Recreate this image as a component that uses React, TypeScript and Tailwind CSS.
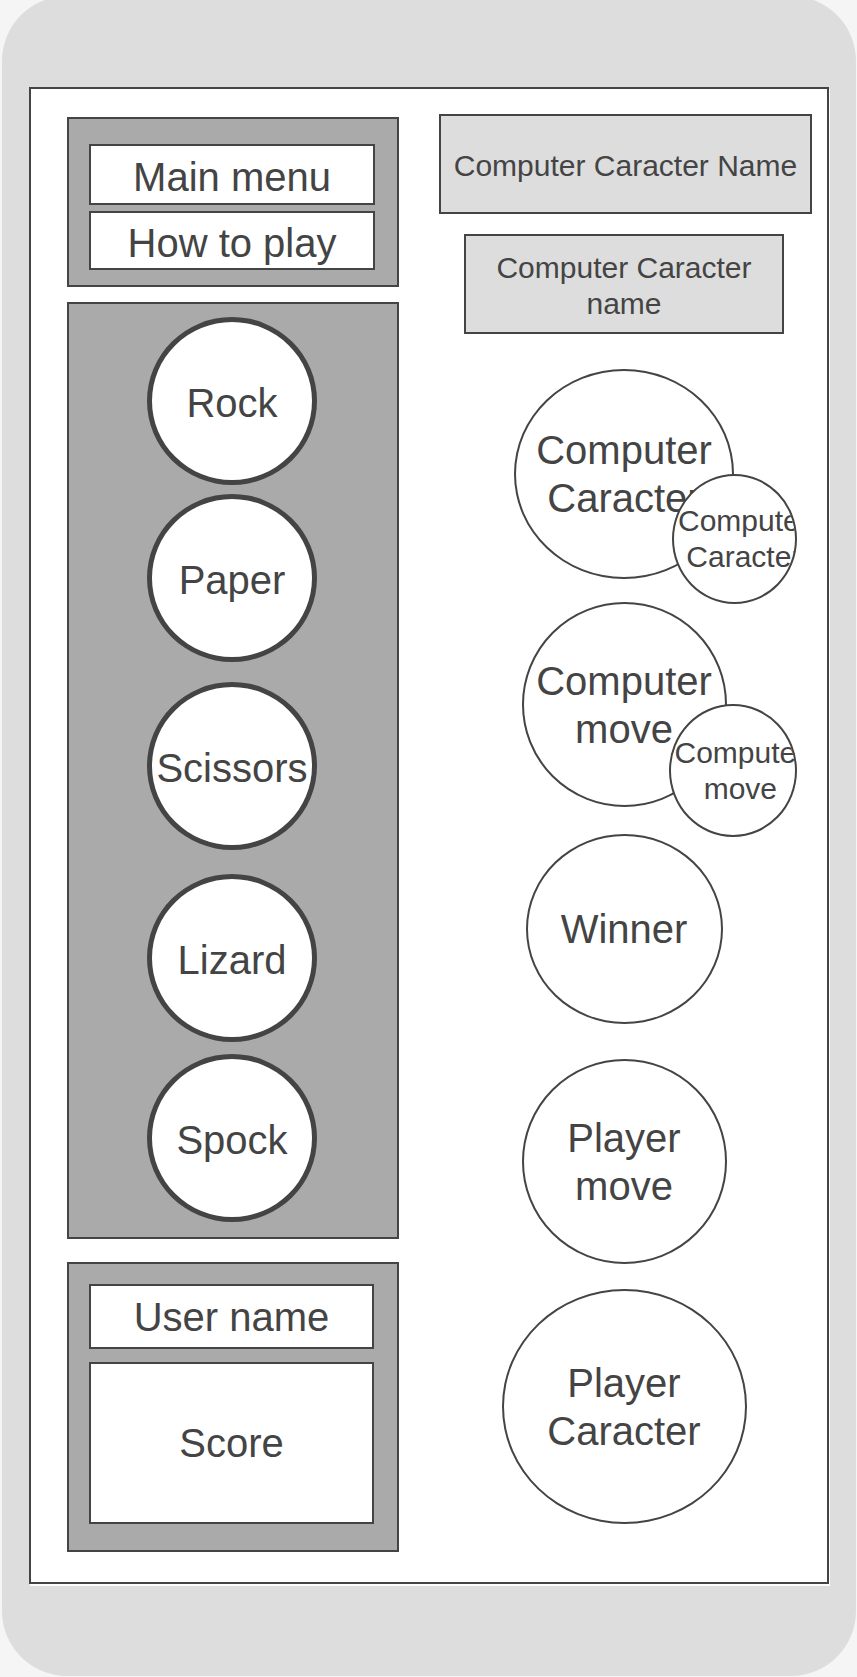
import type { ReactNode } from "react";
import clsx from "clsx";

const moves = [
  { name: "Rock", spacing: "" },
  { name: "Paper", spacing: "mt-[9px]" },
  { name: "Scissors", spacing: "mt-5" },
  { name: "Lizard", spacing: "mt-6" },
  { name: "Spock", spacing: "mt-3" },
];

function Panel({ className, children }: { className?: string; children: ReactNode }) {
  return (
    <section className={clsx("flex flex-col border-2 border-[#444] bg-[#aaa]", className)}>
      {children}
    </section>
  );
}

function MenuButton({ className, children }: { className?: string; children: ReactNode }) {
  return (
    <button
      type="button"
      className={clsx(
        "flex items-center justify-center border-2 border-[#444] bg-white pt-1",
        className,
      )}
    >
      {children}
    </button>
  );
}

function Field({ className, children }: { className?: string; children: ReactNode }) {
  return (
    <div
      className={clsx(
        "flex items-center justify-center border-2 border-[#444] bg-white",
        className,
      )}
    >
      {children}
    </div>
  );
}

function NameBox({ className, children }: { className?: string; children: ReactNode }) {
  return (
    <div
      className={clsx(
        "flex h-[100px] items-center justify-center border-2 border-[#444] bg-[#ddd] pt-1 text-center text-[30px] leading-9",
        className,
      )}
    >
      {children}
    </div>
  );
}

function Disc({
  className,
  lines,
  children,
}: {
  className?: string;
  lines: string[];
  children?: ReactNode;
}) {
  return (
    <div
      className={clsx(
        "relative flex flex-col items-center justify-center rounded-[50%] border-2 border-[#444] bg-white",
        className,
      )}
    >
      {lines.map((line) => (
        <span key={line}>{line}</span>
      ))}
      {children}
    </div>
  );
}

function Badge({ className, lines }: { className?: string; lines: string[] }) {
  return (
    <div
      className={clsx(
        "absolute flex items-center overflow-hidden rounded-[50%] border-2 border-[#444] bg-white pl-1 text-[30px] leading-9",
        className,
      )}
    >
      <div className="flex shrink-0 flex-col items-center">
        {lines.map((line) => (
          <span key={line}>{line}</span>
        ))}
      </div>
    </div>
  );
}

export default function App() {
  return (
    <div className="flow-root min-h-screen overflow-hidden bg-[#f5f5f5] pr-px pb-px pl-0.5 font-['Liberation_Sans',Arial,sans-serif] text-[40px] leading-[48px] text-[#444]">
      <div className="-mt-1 rounded-[65px] bg-[#ddd] px-[27px] pt-[91px] pb-[92px]">
        <main className="grid grid-cols-[332fr_373fr] gap-x-10 border-2 border-[#444] bg-white pt-[25px] pr-[15px] pb-[30px] pl-9 shadow-[1px_2px_0_#fcfcfc]">
          <div className="flex flex-col pt-[3px]">
            <Panel className="pt-[25px] pr-[22px] pb-[15px] pl-5">
              <MenuButton className="h-[61px]">Main menu</MenuButton>
              <MenuButton className="mt-1.5 h-[59px]">How to play</MenuButton>
            </Panel>

            <Panel className="mt-[15px] items-center pt-[13px] pr-0.5 pb-[15px]">
              {moves.map((move) => (
                <button
                  key={move.name}
                  type="button"
                  className={clsx(
                    "flex h-[168px] w-[170px] items-center justify-center rounded-[50%] border-5 border-[#444] bg-white pt-1",
                    move.spacing,
                  )}
                >
                  {move.name}
                </button>
              ))}
            </Panel>

            <Panel className="mt-[23px] pt-5 pr-[23px] pb-[26px] pl-5">
              <Field className="h-[65px]">User name</Field>
              <Field className="mt-[13px] h-[162px]">Score</Field>
            </Panel>
          </div>

          <div className="flex flex-col">
            <NameBox>Computer Caracter Name</NameBox>
            <div className="mt-5 flex flex-col items-center pr-[3px]">
              <NameBox className="w-80">
                Computer Caracter
                <br />
                name
              </NameBox>
              <Disc className="mt-[35px] h-[210px] w-[220px]" lines={["Computer", "Caracter"]}>
                <Badge
                  className="top-[103px] left-[156px] h-[130px] w-[125px]"
                  lines={["Computer", "Caracter"]}
                />
              </Disc>
              <Disc className="mt-[23px] size-[205px]" lines={["Computer", "move"]}>
                <Badge
                  className="top-[100px] left-[145px] h-[133px] w-[128px]"
                  lines={["Computer", "move"]}
                />
              </Disc>
              <Disc className="mt-[27px] h-[190px] w-[197px]" lines={["Winner"]} />
              <Disc className="mt-[35px] size-[205px]" lines={["Player", "move"]} />
              <Disc className="mt-[25px] h-[235px] w-[245px]" lines={["Player", "Caracter"]} />
            </div>
          </div>
        </main>
      </div>
    </div>
  );
}
